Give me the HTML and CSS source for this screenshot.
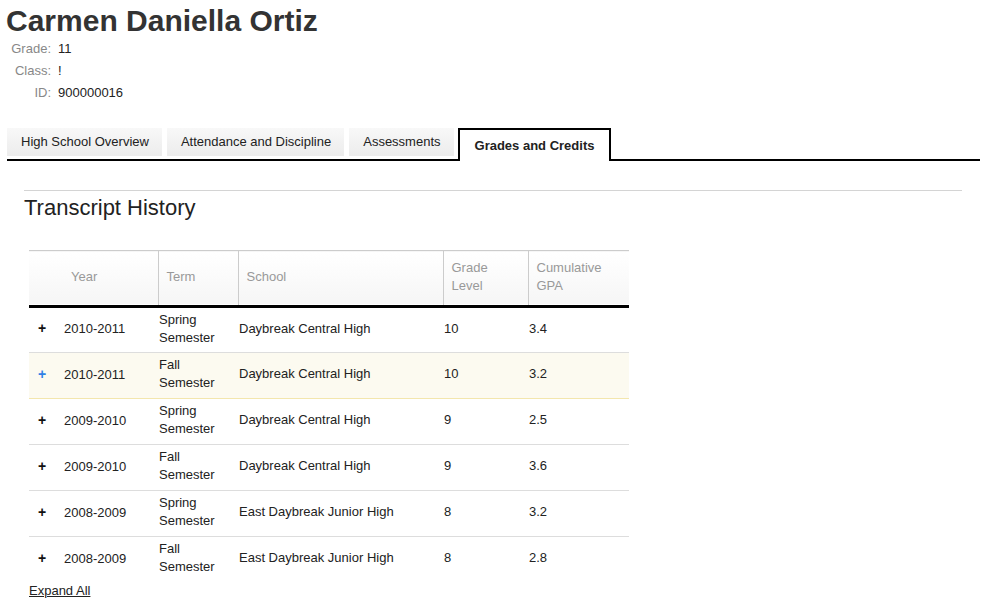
FILE: index.html
```html
<!DOCTYPE html>
<html>
<head>
<meta charset="utf-8">
<link rel="stylesheet" href="styles.css">
</head>
<body>
<div class="page">
  <h1 class="name">Carmen Daniella Ortiz</h1>
  <div class="info">
    <span class="label">Grade:</span><span class="value">11</span>
    <span class="label">Class:</span><span class="value">!</span>
    <span class="label">ID:</span><span class="value">900000016</span>
  </div>
  <div class="tabs">
    <div class="tab">High School Overview</div>
    <div class="tab">Attendance and Discipline</div>
    <div class="tab">Assessments</div>
    <div class="tab active">Grades and Credits</div>
  </div>
  <div class="section">
    <h2 class="title">Transcript History</h2>
    <table class="transcript">
      <colgroup>
        <col class="c-year"><col class="c-term"><col class="c-school"><col class="c-grade"><col class="c-gpa">
      </colgroup>
      <thead>
        <tr>
          <th class="h-year">Year</th>
          <th>Term</th>
          <th>School</th>
          <th>Grade<br>Level</th>
          <th>Cumulative<br>GPA</th>
        </tr>
      </thead>
      <tbody>
        <tr>
          <td><span class="plus">+</span>2010-2011</td>
          <td>Spring<br>Semester</td>
          <td>Daybreak Central High</td>
          <td>10</td>
          <td>3.4</td>
        </tr>
        <tr class="hover">
          <td><span class="plus">+</span>2010-2011</td>
          <td>Fall<br>Semester</td>
          <td>Daybreak Central High</td>
          <td>10</td>
          <td>3.2</td>
        </tr>
        <tr>
          <td><span class="plus">+</span>2009-2010</td>
          <td>Spring<br>Semester</td>
          <td>Daybreak Central High</td>
          <td>9</td>
          <td>2.5</td>
        </tr>
        <tr>
          <td><span class="plus">+</span>2009-2010</td>
          <td>Fall<br>Semester</td>
          <td>Daybreak Central High</td>
          <td>9</td>
          <td>3.6</td>
        </tr>
        <tr>
          <td><span class="plus">+</span>2008-2009</td>
          <td>Spring<br>Semester</td>
          <td>East Daybreak Junior High</td>
          <td>8</td>
          <td>3.2</td>
        </tr>
        <tr>
          <td><span class="plus">+</span>2008-2009</td>
          <td>Fall<br>Semester</td>
          <td>East Daybreak Junior High</td>
          <td>8</td>
          <td>2.8</td>
        </tr>
      </tbody>
    </table>
    <a class="expand" href="#">Expand All</a>
  </div>
</div>
</body>
</html>
```

FILE: styles.css
```css
* { box-sizing: border-box; }
html, body { margin: 0; padding: 0; background: #fff; }
body {
  font-family: "Liberation Sans", Arial, Helvetica, sans-serif;
  font-size: 13px;
  color: #222;
}
.page { padding-top: 4px; }
.name {
  margin: 0 0 0 6px;
  font-size: 30px;
  line-height: 34px;
  font-weight: bold;
  color: #333;
}
.info {
  display: grid;
  grid-template-columns: 45px auto;
  column-gap: 7px;
  margin-left: 6px;
  line-height: 22px;
  font-size: 13px;
}
.info .label { text-align: right; color: #888; }
.info .value { color: #222; }

.tabs {
  display: flex;
  align-items: flex-end;
  gap: 5px;
  margin: 24px 13px 0 7px;
  height: 33px;
  border-bottom: 2px solid #000;
}
.tab {
  height: 28px;
  line-height: 28px;
  margin-bottom: 3px;
  padding: 0 13px 0 14px;
  background: linear-gradient(#f8f8f8, #ececec);
  color: #222;
  white-space: nowrap;
}
.tab.active {
  height: 33px;
  margin-bottom: -2px;
  margin-left: -1px;
  padding: 0 15px;
  line-height: 31px;
  background: #fff;
  border: 2px solid #000;
  border-bottom: none;
  font-weight: bold;
}

.section {
  margin: 29px 31px 0 24px;
  border-top: 1px solid #d4d4d4;
}
.title {
  margin: 4px 0 29px 0;
  font-size: 22px;
  line-height: 26px;
  font-weight: normal;
  color: #222;
}
.transcript {
  margin-left: 5px;
  width: 600px;
  table-layout: fixed;
  border-collapse: collapse;
}
.c-year { width: 129px; }
.c-term { width: 80px; }
.c-school { width: 205px; }
.c-grade { width: 85px; }
.c-gpa { width: 101px; }

.transcript thead tr {
  background: linear-gradient(#fff, #f6f6f6);
  border-top: 1px solid #ccc;
  border-bottom: 3px solid #000;
}
.transcript th {
  height: 56px;
  padding: 0 0 2px 8px;
  text-align: left;
  vertical-align: middle;
  font-weight: normal;
  color: #999;
  line-height: 18px;
  border-left: 1px solid #ccc;
}
.transcript th.h-year { padding-left: 42px; border-left: none; }
.transcript tbody tr { border-bottom: 1px solid #ddd; }
.transcript tbody tr:last-child { border-bottom: none; }
.transcript td {
  height: 46px;
  padding: 0 0 3px 1px;
  vertical-align: middle;
  line-height: 18px;
  color: #222;
}
.transcript tbody td:first-child { padding-left: 9px; }
.plus {
  display: inline-block;
  width: 26px;
  font-weight: bold;
  font-size: 14px;
  color: #111;
}
.transcript tbody tr.hover {
  background: #fcfaf0;
  border-bottom: 1px solid #f3e6ad;
}
.transcript tbody tr.hover .plus { color: #2f80e6; }

.expand {
  display: inline-block;
  margin-left: 5px;
  line-height: 16px;
  color: #222;
  text-decoration: underline;
}
```
